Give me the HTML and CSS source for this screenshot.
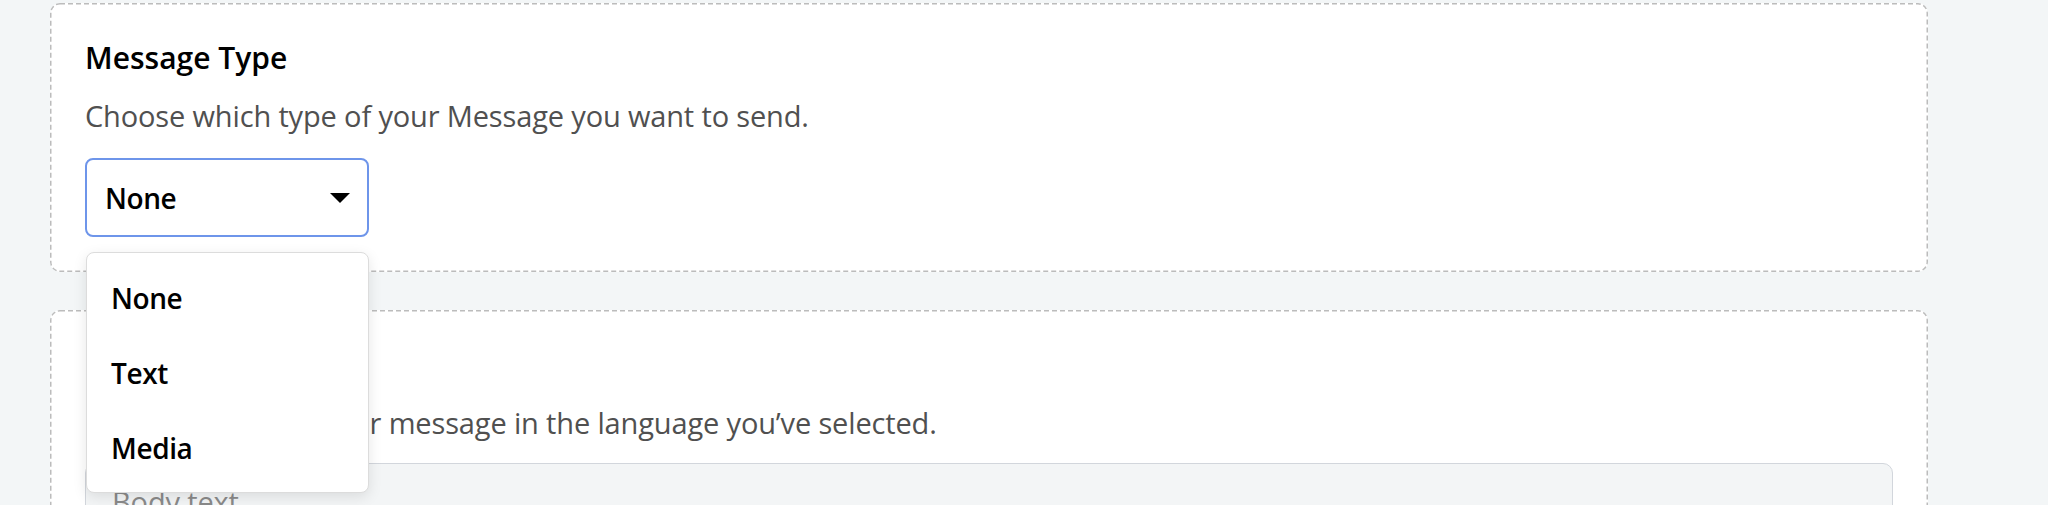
FILE: index.html
```html
<!DOCTYPE html>
<html lang="en">
<head>
<meta charset="utf-8">
<title>Message Type</title>
<link rel="stylesheet" href="styles.css">
</head>
<body>
<main class="page">
  <section class="card">
    <h2 class="card-title">Message Type</h2>
    <p class="card-desc">Choose which type of your Message you want to send.</p>
    <div class="select-wrap">
      <div class="select">
        <span class="select-value">None</span>
        <span class="select-caret"></span>
      </div>
      <ul class="menu">
        <li class="menu-item">None</li>
        <li class="menu-item">Text</li>
        <li class="menu-item">Media</li>
      </ul>
    </div>
  </section>
  <section class="card card-body">
    <h2 class="card-title">Body</h2>
    <p class="card-desc">Enter the text for your message in the language you’ve selected.</p>
    <div class="textarea">
      <span class="placeholder">Body text</span>
    </div>
  </section>
</main>
</body>
</html>
```
FILE: styles.css
```css
html, body {
  margin: 0;
  padding: 0;
  background: #f3f6f7;
}

body {
  font-family: "Open Sans", "Noto Sans", sans-serif;
  color: #000;
  overflow: hidden;
  height: 505px;
}

.page {
  padding: 3px 0 0 50px;
  width: 1878px;
  display: flex;
  flex-direction: column;
  gap: 38px;
}

.card {
  background-color: #fff;
  background-image: url("data:image/svg+xml,%3Csvg xmlns='http://www.w3.org/2000/svg' width='100%25' height='100%25'%3E%3Crect width='100%25' height='100%25' rx='10' ry='10' fill='none' stroke='%23bcbcbc' stroke-width='3' stroke-dasharray='5 3'/%3E%3C/svg%3E");
  background-repeat: no-repeat;
  background-size: 100% 100%;
  border-radius: 10px;
  padding: 35px;
}

.card-title {
  margin: 0;
  font-size: 30px;
  line-height: 40px;
  font-weight: 600;
  color: #000;
  letter-spacing: 0;
}

.card-desc {
  margin: 18px 0 0;
  font-size: 29px;
  line-height: 40px;
  font-weight: 400;
  color: #505050;
  letter-spacing: -0.15px;
}

.select-wrap {
  position: relative;
  margin-top: 22px;
  width: 284px;
}

.select {
  box-sizing: border-box;
  width: 284px;
  height: 79px;
  border: 2px solid #6e95ea;
  border-radius: 8px;
  padding: 0 17px 0 18px;
  display: flex;
  align-items: center;
  justify-content: space-between;
}

.select-value {
  font-size: 28px;
  line-height: 40px;
  font-weight: 600;
  letter-spacing: -0.4px;
}

.select-caret {
  width: 0;
  height: 0;
  border-left: 10px solid transparent;
  border-right: 10px solid transparent;
  border-top: 10px solid #000;
}

.menu {
  position: absolute;
  top: calc(100% + 15px);
  left: 1px;
  width: 283px;
  box-sizing: border-box;
  margin: 0;
  padding: 7px 0;
  list-style: none;
  background: #fff;
  border: 1px solid #dcdcdc;
  border-radius: 8px;
  box-shadow: 0 4px 14px rgba(0, 0, 0, 0.10);
  z-index: 5;
}

.menu-item {
  padding: 17.5px 24px;
  font-size: 28px;
  line-height: 40px;
  font-weight: 600;
  letter-spacing: -0.4px;
}

.textarea {
  margin-top: 20px;
  height: 120px;
  box-sizing: border-box;
  background: #f3f5f6;
  border: 1px solid #d2d6dc;
  border-radius: 10px;
  padding: 18px 26px;
}

.placeholder {
  font-size: 29px;
  line-height: 40px;
  color: #8a8a8a;
  letter-spacing: -0.15px;
}
```
